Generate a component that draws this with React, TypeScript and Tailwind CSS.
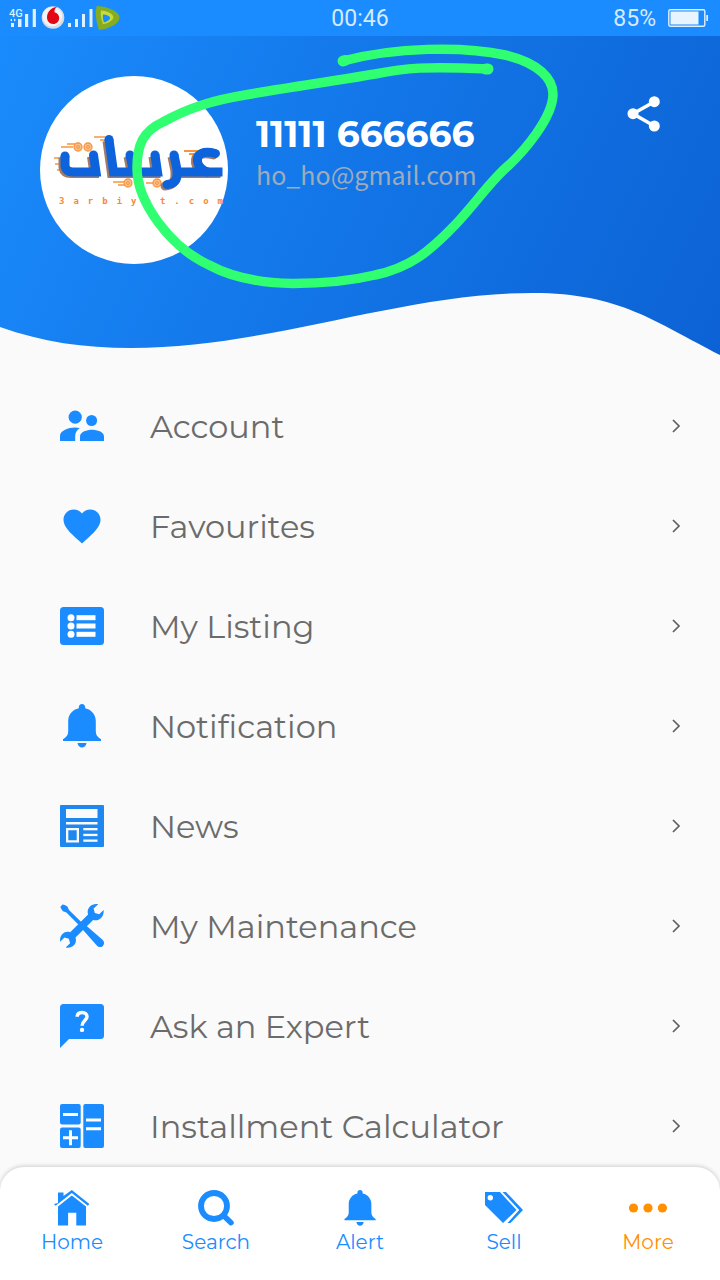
import type { ReactNode } from "react";

function Glyph({ children }: { children: ReactNode }) {
  return (
    <svg viewBox="0 0 44 44" className="size-11 shrink-0" fill="#1a8cff" aria-hidden="true">
      {children}
    </svg>
  );
}

const bellPath =
  "M22 0c-1.9 0-3.2 1.4-3.2 3.2v1C12.600 5.400 8.200 10.600 8.200 17v10.500c0 3-1.500 5.600-5.200 7.800V37h38v-1.700c-3.700-2.200-5.200-4.800-5.200-7.800V17c0-6.400-4.400-11.600-10.600-12.800v-1C25.200 1.400 23.900 0 22 0zM17.500 39h9c-.5 2.800-2.200 4.500-4.500 4.500S18 41.800 17.500 39z";

const menu: { label: string; icon: ReactNode }[] = [
  {
    label: "Account",
    icon: (
      <Glyph>
        <circle cx="15.200" cy="13.200" r="6.600" />
        <circle cx="31.600" cy="16.500" r="5.500" />
        <path d="M0 37v-5c0-5.500 8.500-8.500 15-8.500 1.700 0 3.300.2 4.800.6-3.200 2.200-4.600 4.800-4.600 8V37z" />
        <path d="M20 37v-4.500c0-4.700 7-6.700 12-6.700s12 2 12 6.700V37z" />
      </Glyph>
    ),
  },
  {
    label: "Favourites",
    icon: (
      <Glyph>
        <path
          transform="translate(-.2 0) scale(1.85)"
          d="M12 21.350l-1.450-1.320C5.400 15.360 2 12.280 2 8.500 2 5.420 4.420 3 7.500 3c1.740 0 3.410.810 4.500 2.090C13.090 3.810 14.760 3 16.500 3 19.580 3 22 5.420 22 8.500c0 3.780-3.400 6.860-8.550 11.540L12 21.350z"
        />
      </Glyph>
    ),
  },
  {
    label: "My Listing",
    icon: (
      <Glyph>
        <rect x="0" y="3" width="44" height="38" rx="3.500" />
        <g fill="#fff">
          <circle cx="11" cy="13.700" r="3.500" />
          <circle cx="11" cy="22" r="3.500" />
          <circle cx="11" cy="30.300" r="3.500" />
          <rect x="16.500" y="11.200" width="19" height="5" />
          <rect x="16.500" y="19.500" width="19" height="5" />
          <rect x="16.500" y="27.800" width="19" height="5" />
        </g>
      </Glyph>
    ),
  },
  {
    label: "Notification",
    icon: (
      <Glyph>
        <path d={bellPath} />
      </Glyph>
    ),
  },
  {
    label: "News",
    icon: (
      <Glyph>
        <rect x="0" y="1" width="44" height="42" rx="1" fill="#1e88f0" />
        <g fill="#fafafa">
          <rect x="6" y="5" width="31.500" height="9" />
          <rect x="6" y="18" width="31.500" height="2.500" />
          <path d="M6 24h13v14.500H6zM8.300 26.300v9.900h8.400v-9.900z" fillRule="evenodd" />
          <rect x="23.300" y="24" width="14.200" height="2.300" />
          <rect x="23.300" y="29.800" width="14.200" height="2.300" />
          <rect x="23.300" y="35.500" width="14.200" height="2.300" />
        </g>
      </Glyph>
    ),
  },
  {
    label: "My Maintenance",
    icon: (
      <Glyph>
        <path d="M.6 2.500L2.300.7C3 .2 5 1 7.400 2.500l1.600 3.600 12.500 12.200-2.700 2.700L6.400 8.600 3 7.300C1.200 5 .1 3.400.6 2.500z" />
        <path d="M23.800 19.600l18.700 16.200c2 2 2 4.400.4 6.100-1.700 1.700-4.200 1.600-6.100-.3L20.400 23z" />
        <path d="M38.200.2c-3.300-.5-6.500.3-8.500 2.500-2 2.200-2.500 5-1.600 7.900L10.200 28.200c-3-.8-5.700-.2-7.700 1.800C.4 32-.3 34.800.2 37.800l4.300-4.200 4.300 1.200 1.300 4.400-4.400 4.300c3.400.6 6.200-.2 8.200-2.300 2-2 2.500-4.900 1.600-7.700l17.600-17.600c2.900.9 5.800.2 7.900-1.900 2-2 3-4.900 2.600-7.900l-4.400 4.200-4.400-1.200-1.200-4.500z" />
      </Glyph>
    ),
  },
  {
    label: "Ask an Expert",
    icon: (
      <Glyph>
        <path d="M3.500 0h37Q44 0 44 3.500v28Q44 35 40.500 35H9L0 44V3.500Q0 0 3.500 0z" />
        <path
          d="M17.200 12.800c0-2.800 2.100-4.300 4.900-4.300s4.900 1.600 4.900 4.200c0 3.700-4.900 4.100-4.900 9"
          fill="none"
          stroke="#fff"
          strokeWidth="3.500"
        />
        <circle cx="22" cy="25.900" r="2.200" fill="#fff" />
      </Glyph>
    ),
  },
  {
    label: "Installment Calculator",
    icon: (
      <Glyph>
        <rect x="0" y="0" width="20.700" height="20.500" rx="2" />
        <rect x="0" y="23.500" width="20.700" height="20.500" rx="2" />
        <rect x="23.300" y="0" width="20.700" height="44" rx="2" />
        <path
          d="M3 10.500h15M26 16h15M26 24.800h15M3 33.700h15M10.500 26.200v15"
          stroke="#fff"
          strokeWidth="2.900"
        />
      </Glyph>
    ),
  },
];

const tabs: { label: string; active?: boolean; icon: ReactNode }[] = [
  {
    label: "Home",
    icon: (
      <>
        <path d="M4 13V2.500h5.500V6L17.800 0l17.600 14-1.600 1.800L17.800 3 1.600 15.800 0 14z" />
        <path d="M4 16.500L17.800 5.400 32 16.500v19h-9.700V22.800h-8.200v12.700H4z" />
      </>
    ),
  },
  {
    label: "Search",
    icon: (
      <>
        <circle cx="16" cy="16" r="13" fill="none" stroke="#1a8cff" strokeWidth="5.800" />
        <path d="M25.500 25.500l7.500 7.200" stroke="#1a8cff" strokeWidth="5.500" strokeLinecap="round" />
      </>
    ),
  },
  { label: "Alert", icon: <path transform="scale(.82)" d={bellPath} /> },
  {
    label: "Sell",
    icon: (
      <>
        <path
          fillRule="evenodd"
          d="M-1 2h15l16.500 18L17 33 -1 15zM4.300 5a2.700 2.700 0 1 0 0 5.400 2.700 2.700 0 0 0 0-5.400z"
        />
        <path d="M16.500 2h3.500l17 18-12.500 13h-3L33.200 20z" />
      </>
    ),
  },
  {
    label: "More",
    active: true,
    icon: (
      <g fill="#ff9100">
        <circle cx="3.500" cy="18" r="4.600" />
        <circle cx="18" cy="18" r="4.600" />
        <circle cx="32.400" cy="18" r="4.600" />
      </g>
    ),
  },
];

function StatusBar() {
  return (
    <div className="grid h-9 shrink-0 grid-cols-3 items-center bg-[#1a8cff] px-2 font-['Roboto',sans-serif] text-[23px] text-[#d5eaff]">
      <svg viewBox="8 0 114 36" className="h-9 w-[114px]" aria-label="Signal strength">
        <g fill="#dff0ff">
          <rect x="11" y="23" width="3" height="4" />
          <rect x="18" y="19" width="3.500" height="8" />
          <rect x="25" y="14" width="3.200" height="13" />
          <rect x="32.700" y="9" width="3.200" height="18" />
          <rect x="68" y="23" width="3" height="4" />
          <rect x="75" y="19" width="3" height="8" />
          <rect x="82" y="14" width="3" height="13" />
          <rect x="89.500" y="9" width="3" height="18" />
          <text x="9" y="17" fontSize="11" fontWeight="500">
            4G
          </text>
          <path d="M10 20l2-1.500v3zM16 20l-2-1.500v3z" />
        </g>
        <circle cx="53" cy="17.500" r="11.300" fill="#d6dbe3" />
        <circle cx="52.400" cy="16.500" r="9.800" fill="#f3f3f5" />
        <path
          d="M57 7c-5 0-10 4.300-10 10.300 0 4 2.700 6.700 6.200 6.700 3.400 0 6-2.600 6-6 0-3-2-5-4.700-5.700C54.200 10 55 8.300 57 7z"
          fill="#e30613"
        />
        <path
          d="M97.500 7c7 0 20 4.500 21 10.200 1 5.500-11 11-19 11.500C97.500 22 95.500 13 97.500 7z"
          fill="#86ad20"
          stroke="#86ad20"
          strokeWidth="2"
        />
        <path
          d="M101 10.500c5 .3 12 2.800 12.300 6.500.2 3.300-5.500 6.500-10.300 7-1.500-4-2.900-9.300-2-13.500z"
          fill="#c6dc3a"
        />
        <path d="M103 14.500c3 .2 7 1.200 7.100 3.400.1 2-4.100 4.200-6.300 4.400-.8-2-1.200-5.400-.8-7.800z" fill="#1a8cff" />
      </svg>
      <time className="pt-0.5 text-center">00:46</time>
      <div className="flex items-center justify-end gap-3 pr-1">
        <span className="pt-0.5">85%</span>
        <svg viewBox="0 0 40 20" className="h-5 w-10" aria-label="Battery">
          <rect x=".8" y="1.800" width="36" height="16.500" rx="1.500" fill="none" stroke="#dff0ff" strokeWidth="1.400" />
          <rect x="2.500" y="3.500" width="28" height="13" fill="#e8f4ff" />
          <rect x="38.300" y="7" width="1.700" height="6" fill="#dff0ff" />
        </svg>
      </div>
    </div>
  );
}

const letterShapes =
  "M25 80v10q1 6 8 6h23L53.500 79M69 63.500L73.500 96h44L115 79M93.500 96L90 79M134 79l3.500 17h45";
const letterCurves = "M137 96q1 12-10 12.500M175.500 77.500c-12-3-19 0-18 8q1 7 10 10.500";

function BrandLogo() {
  return (
    <svg
      viewBox="0 0 188 188"
      className="size-[188px] shrink-0 overflow-visible rounded-full bg-white"
      aria-label="3arbiyat.com"
    >
      <g stroke="#f7953f" strokeWidth="1.300" fill="#fbc08e">
        <circle cx="38" cy="71" r="4" />
        <circle cx="48" cy="71" r="4" />
        <circle cx="88" cy="107" r="4" />
        <circle cx="99" cy="107" r="4" />
        <circle cx="117" cy="107" r="4" />
        <path d="M21 71h12M27 68h8M73 106h11M78 109h7M106 107h7M54 61h11M60 64h6M14 82h8M15 88h7M17 94h5" />
        <path d="M144 75h18M149 78h8" strokeWidth="2" />
        <g fill="none" stroke="#f7953f" strokeWidth="1">
          <circle cx="38" cy="71" r="1.500" />
          <circle cx="48" cy="71" r="1.500" />
          <circle cx="88" cy="107" r="1.500" />
          <circle cx="117" cy="107" r="1.500" />
        </g>
      </g>
      <g fill="none" strokeLinejoin="miter" strokeWidth="9">
        <g stroke="#a57a62" transform="translate(-2 1.500)">
          <path d={letterShapes} />
          <path d={letterCurves} strokeLinecap="round" />
        </g>
        <g stroke="#0c63dc">
          <path d={letterShapes} />
          <path d={letterCurves} strokeLinecap="round" />
        </g>
      </g>
      <g fill="#0c63dc">
        <circle cx="25" cy="80" r="4.500" />
        <circle cx="53.500" cy="79" r="4.500" />
        <circle cx="69" cy="63.500" r="4.500" />
        <circle cx="90" cy="79" r="4.500" />
        <circle cx="115" cy="79" r="4.500" />
        <circle cx="134" cy="79" r="4.500" />
      </g>
      <path d="M64 86l1.800 16M124.500 86l2.500 16" stroke="#fff" strokeWidth="1.500" />
      <text
        x="19"
        y="128"
        fill="#f58a33"
        className="font-['DejaVu_Sans_Mono',monospace] text-[9px] font-bold tracking-[9px]"
      >
        3arbiyat.com
      </text>
    </svg>
  );
}

function ProfileHeader() {
  return (
    <header className="relative h-80 shrink-0 bg-[linear-gradient(115deg,#1a8bfc_0%,#1274e6_52%,#0c62d4_100%)] px-10 pt-10">
      <svg
        viewBox="0 0 720 68"
        preserveAspectRatio="none"
        className="absolute inset-x-0 bottom-0 h-[68px] w-full"
        aria-hidden="true"
      >
        <path
          d="M0 39C42 54 84 60 131 60C270 60 400 5 533 5C620 5 655 34 720 67V68H0z"
          fill="#fafafa"
        />
      </svg>
      <div className="flex items-start">
        <BrandLogo />
        <div className="ml-7 min-w-0 flex-1 pt-9">
          <h1 className="font-['Montserrat',sans-serif] text-4xl leading-[44px] font-bold text-white">
            11111 666666
          </h1>
          <p className="font-['Noto_Sans_CJK_SC',sans-serif] text-[25px] leading-9 text-[#9fabba]">
            ho_ho@gmail.com
          </p>
        </div>
        <button type="button" aria-label="Share" className="mt-4 mr-4 shrink-0">
          <svg viewBox="0 0 40 44" className="h-11 w-10">
            <path d="M30.300 9.700L9 21.700l21.300 12.300" fill="none" stroke="#fff" strokeWidth="3.500" />
            <g fill="#fff">
              <circle cx="30.300" cy="9.700" r="5.500" />
              <circle cx="9" cy="21.700" r="5.500" />
              <circle cx="30.300" cy="34" r="5.500" />
            </g>
          </svg>
        </button>
      </div>
    </header>
  );
}

function InkCircle() {
  return (
    <svg
      viewBox="0 0 440 260"
      className="pointer-events-none absolute top-10 left-[125px] h-[260px] w-[440px]"
      aria-hidden="true"
    >
      <path
        d="M218 21C270 7 338 6 380 15C414 23 428 39 428 54C428 78 398 112 384 125C366 140 350 164 330 185C305 211 285 228 250 235C225 241 195 243.500 168 243.500C136 243 108 238 84 225C45 207 12 162 12 128C12 105 18 91 38 82C65 67 90 60 120 55C165 47 210 41 250 34C280 28 300 26 363 29"
        fill="none"
        stroke="#30ff72"
        strokeWidth="9.500"
        strokeLinecap="round"
        strokeLinejoin="round"
      />
      <path d="M218 21l2-.5M361 29h2" stroke="#30ff72" strokeWidth="11" strokeLinecap="round" />
    </svg>
  );
}

export default function App() {
  return (
    <div className="relative flex h-screen flex-col overflow-hidden bg-[#fafafa]">
      <StatusBar />
      <ProfileHeader />
      <InkCircle />
      <main className="min-h-0 flex-1 overflow-y-auto pt-5 [scrollbar-width:none]">
        <ul>
          {menu.map((item) => (
            <li key={item.label}>
              <a href="#" className="flex h-[100px] items-center pr-9 pl-[60px]">
                {item.icon}
                <span className="ml-[46px] flex-1 pt-0.5 font-['Montserrat',sans-serif] text-[32px] leading-10 text-[#6b6b6b] [font-variant-ligatures:none]">
                  {item.label}
                </span>
                <svg viewBox="0 0 16 16" className="size-4" aria-hidden="true">
                  <path d="M5 2l6 6-6 6" fill="none" stroke="#606060" strokeWidth="1.700" />
                </svg>
              </a>
            </li>
          ))}
        </ul>
      </main>
      <nav className="grid shrink-0 grid-cols-5 rounded-t-3xl bg-white pt-[23px] pb-6 shadow-[0_-1px_4px_rgba(0,0,0,0.18)]">
        {tabs.map((tab) => (
          <a
            key={tab.label}
            href="#"
            className={
              "flex flex-col items-center gap-0.5 font-['Montserrat',sans-serif] text-xl " +
              (tab.active ? "text-[#ff9100]" : "text-[#1a8cff]")
            }
          >
            <svg viewBox="0 0 36 36" className="size-9 overflow-visible" fill="#1a8cff" aria-hidden="true">
              {tab.icon}
            </svg>
            {tab.label}
          </a>
        ))}
      </nav>
    </div>
  );
}
